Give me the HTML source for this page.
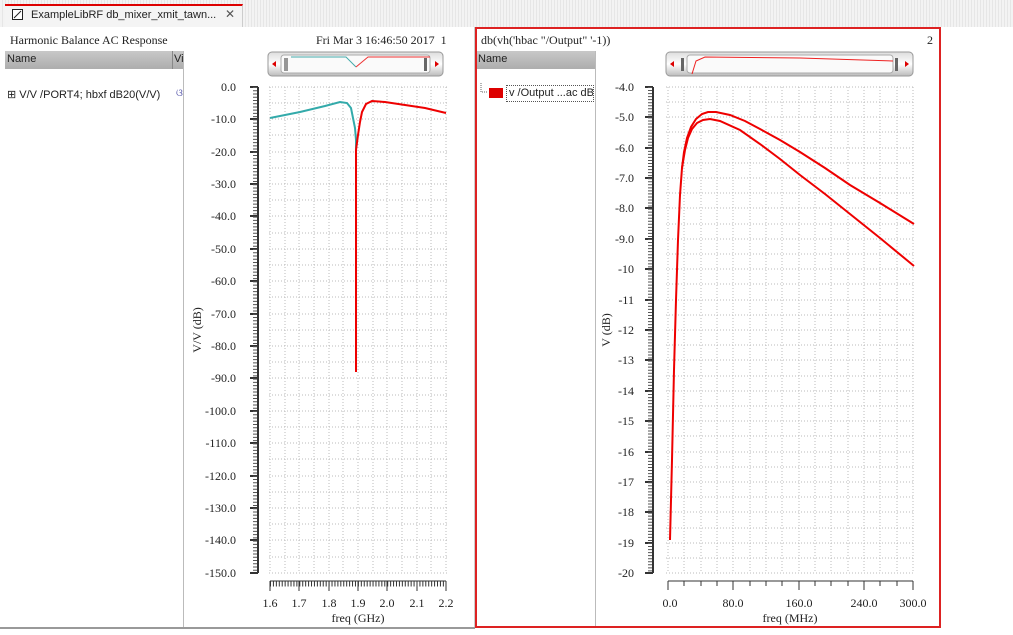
<!DOCTYPE html>
<html><head><meta charset="utf-8"><style>
*{margin:0;padding:0;box-sizing:border-box}
body{width:1013px;height:635px;background:#fff;position:relative;overflow:hidden;font-family:"Liberation Sans",sans-serif}
.a{position:absolute}
.serif{font-family:"Liberation Serif",serif}
</style></head><body>
<div class="a" style="left:0;top:0;width:1013px;height:27px;background:repeating-linear-gradient(90deg,#f3f3f3 0 2px,#e6e6e6 2px 3px)"></div>
<div class="a" style="left:5px;top:4px;width:238px;height:23px;background:#f4f4f4;border-top:2px solid #d00;border-right:1px solid #ccc"></div>
<div class="a" style="left:12px;top:9px;width:11px;height:11px;border:1px solid #222;background:#fff"></div>
<svg class="a" style="left:12px;top:9px" width="11" height="11"><path d="M2 9 L9 2" stroke="#222"/></svg>
<div class="a" style="left:31px;top:9px;font-size:11px;color:#222">ExampleLibRF db_mixer_xmit_tawn...</div>
<div class="a" style="left:225px;top:7px;font-size:12px;color:#555">✕</div>

<div class="a" style="left:0;top:27px;width:475px;height:601px;background:#fff;border-right:1px solid #ccc"></div>
<div class="a serif" style="left:10px;top:33px;font-size:12px;color:#222">Harmonic Balance AC Response</div>
<div class="a serif" style="left:316px;top:33px;font-size:12px;color:#222">Fri Mar 3 16:46:50 2017 &nbsp;1</div>
<div class="a" style="left:5px;top:51px;width:179px;height:18px;background:linear-gradient(#c8c8c8,#adadad)"></div>
<div class="a" style="left:172px;top:51px;width:1px;height:18px;background:#888"></div>
<div class="a" style="left:7px;top:53px;font-size:11px;color:#222">Name</div>
<div class="a" style="left:174px;top:53px;font-size:11px;color:#222;width:10px;overflow:hidden">Vi</div>
<div class="a" style="left:183px;top:51px;width:1px;height:577px;background:#bbb"></div>
<div class="a" style="left:7px;top:88px;font-size:11px;color:#222">⊞ V/V /PORT4; hbxf dB20(V/V)</div>
<div class="a" style="left:176px;top:88px;font-size:10px;color:#55a">ଓ</div>
<div class="a" style="left:0;top:627px;width:475px;height:2px;background:#999"></div>

<div class="a" style="left:475px;top:27px;width:466px;height:601px;border:2px solid #d22"></div>
<div class="a serif" style="left:481px;top:33px;font-size:12px;color:#222">db(vh('hbac "/Output" '-1))</div>
<div class="a serif" style="left:927px;top:33px;font-size:12px;color:#222">2</div>
<div class="a" style="left:477px;top:51px;width:118px;height:18px;background:linear-gradient(#c8c8c8,#adadad)"></div>
<div class="a" style="left:478px;top:53px;font-size:11px;color:#222">Name</div>
<div class="a" style="left:595px;top:51px;width:1px;height:575px;background:#bbb"></div>
<svg class="a" style="left:480px;top:83px" width="12" height="12"><path d="M1 0V9H8" stroke="#666" stroke-dasharray="1 1" fill="none"/></svg>
<div class="a" style="left:489px;top:88px;width:14px;height:10px;background:#d00"></div>
<div class="a" style="left:506px;top:85px;width:88px;height:17px;border:1px dotted #555;font-size:11px;color:#222;padding:1px 2px;white-space:nowrap;overflow:hidden">v /Output ...ac dB</div>

<svg class="a" style="left:0;top:0" width="1013" height="635" font-family="Liberation Serif,serif" font-size="12" fill="#222">
<defs>
<linearGradient id="sb" x1="0" y1="0" x2="0" y2="1"><stop offset="0" stop-color="#ddd"/><stop offset=".5" stop-color="#fff"/><stop offset="1" stop-color="#bbb"/></linearGradient>
</defs>
<rect x="268" y="52" width="175" height="24" rx="4" fill="url(#sb)" stroke="#999"/>
<rect x="281" y="55" width="149" height="18" rx="3" fill="#fafafa" stroke="#aaa"/>
<path d="M272 64l4-3v6z M439 64l-4-3v6z" fill="#d00"/>
<path d="M285 58v13M287 58v13" stroke="#333"/>
<rect x="424" y="58" width="3" height="13" fill="#666"/>
<path d="M291 57H346L356 67" stroke="#4aa" fill="none"/>
<path d="M356 67L368 57H430" stroke="#e33" fill="none"/>
<rect x="666" y="52" width="247" height="24" rx="4" fill="url(#sb)" stroke="#999"/>
<rect x="687" y="55" width="206" height="18" rx="3" fill="#fafafa" stroke="#aaa"/>
<path d="M670 64l4-3v6z M909 64l-4-3v6z" fill="#d00"/>
<rect x="681" y="58" width="3" height="13" fill="#666"/>
<rect x="895" y="58" width="3" height="13" fill="#666"/>
<path d="M692 74L696 61L705 57L800 58L893 61" stroke="#e22" fill="none"/>

<g stroke="#bbb" stroke-dasharray="1 2">
<path d="M269 87H447M269 103H447M269 119H447M269 135H447M269 152H447M269 168H447M269 184H447M269 200H447M269 216H447M269 233H447M269 249H447M269 265H447M269 281H447M269 297H447M269 314H447M269 330H447M269 346H447M269 362H447M269 378H447M269 395H447M269 411H447M269 427H447M269 443H447M269 459H447M269 476H447M269 492H447M269 508H447M269 524H447M269 540H447M269 557H447M269 573H447"/>
<path d="M270 87V573M285 87V573M299 87V573M314 87V573M329 87V573M343 87V573M358 87V573M373 87V573M387 87V573M402 87V573M417 87V573M431 87V573M446 87V573"/>
</g>
<path d="M258 87V573" stroke="#333" stroke-width="2"/>
<path d="M250 87H258M250 119H258M250 152H258M250 184H258M250 216H258M250 249H258M250 281H258M250 314H258M250 346H258M250 378H258M250 411H258M250 443H258M250 476H258M250 508H258M250 540H258M250 573H258" stroke="#333" stroke-width="2"/>
<path d="M255 87V573" stroke="#555" stroke-width="4" stroke-dasharray="1 2.24"/>
<path d="M270 581H446" stroke="#333"/>
<path d="M270 581V591M299 581V591M329 581V591M358 581V591M387 581V591M417 581V591M446 581V591" stroke="#333"/>
<path d="M270 584H446" stroke="#333" stroke-width="5" stroke-dasharray="1 1.93"/>
<g text-anchor="end">
<text x="236" y="91">0.0</text><text x="236" y="123">-10.0</text><text x="236" y="156">-20.0</text><text x="236" y="188">-30.0</text><text x="236" y="220">-40.0</text><text x="236" y="253">-50.0</text><text x="236" y="285">-60.0</text><text x="236" y="318">-70.0</text><text x="236" y="350">-80.0</text><text x="236" y="382">-90.0</text><text x="236" y="415">-100.0</text><text x="236" y="447">-110.0</text><text x="236" y="480">-120.0</text><text x="236" y="512">-130.0</text><text x="236" y="544">-140.0</text><text x="236" y="577">-150.0</text>
</g>
<g text-anchor="middle">
<text x="270" y="607">1.6</text><text x="299" y="607">1.7</text><text x="329" y="607">1.8</text><text x="358" y="607">1.9</text><text x="387" y="607">2.0</text><text x="417" y="607">2.1</text><text x="446" y="607">2.2</text>
<text x="358" y="622">freq (GHz)</text>
</g>
<text transform="translate(201 330) rotate(-90)" text-anchor="middle">V/V (dB)</text>
<path d="M270 118L300 112L325 106L340 102L347 103L351 108L353 118L355 128L356 140L356 372" stroke="#3aa" stroke-width="2" fill="none"/>
<path d="M356 372V150L358 135L360 122L362 112L366 104L372 101L385 102L405 105L425 108L446 113" stroke="#e00" stroke-width="2" fill="none"/>

<g stroke="#bbb" stroke-dasharray="1 2">
<path d="M666 87H915M666 102H915M666 117H915M666 132H915M666 148H915M666 163H915M666 178H915M666 193H915M666 208H915M666 224H915M666 239H915M666 254H915M666 269H915M666 284H915M666 300H915M666 315H915M666 330H915M666 345H915M666 360H915M666 376H915M666 391H915M666 406H915M666 421H915M666 436H915M666 452H915M666 467H915M666 482H915M666 497H915M666 512H915M666 528H915M666 543H915M666 558H915M666 573H915"/>
<path d="M668 87V573M684 87V573M701 87V573M717 87V573M733 87V573M750 87V573M766 87V573M782 87V573M799 87V573M815 87V573M831 87V573M848 87V573M864 87V573M880 87V573M897 87V573M913 87V573"/>
</g>
<path d="M653 87V573" stroke="#333" stroke-width="2"/>
<path d="M645 87H653M645 117H653M645 148H653M645 178H653M645 208H653M645 239H653M645 269H653M645 300H653M645 330H653M645 360H653M645 391H653M645 421H653M645 452H653M645 482H653M645 512H653M645 543H653M645 573H653" stroke="#333" stroke-width="2"/>
<path d="M650 87V573" stroke="#555" stroke-width="4" stroke-dasharray="1 2.04"/>
<path d="M668 581H913" stroke="#333"/>
<path d="M668 581V590M684 581V586M701 581V586M717 581V586M733 581V590M750 581V586M766 581V586M782 581V586M799 581V590M815 581V586M831 581V586M848 581V586M864 581V590M880 581V586M897 581V586M913 581V590" stroke="#333"/>
<g text-anchor="end">
<text x="634" y="91">-4.0</text><text x="634" y="121">-5.0</text><text x="634" y="152">-6.0</text><text x="634" y="182">-7.0</text><text x="634" y="212">-8.0</text><text x="634" y="243">-9.0</text><text x="634" y="273">-10</text><text x="634" y="304">-11</text><text x="634" y="334">-12</text><text x="634" y="364">-13</text><text x="634" y="395">-14</text><text x="634" y="425">-15</text><text x="634" y="456">-16</text><text x="634" y="486">-17</text><text x="634" y="516">-18</text><text x="634" y="547">-19</text><text x="634" y="577">-20</text>
</g>
<g text-anchor="middle">
<text x="670" y="607">0.0</text><text x="733" y="607">80.0</text><text x="799" y="607">160.0</text><text x="864" y="607">240.0</text><text x="913" y="607">300.0</text>
<text x="790" y="622">freq (MHz)</text>
</g>
<text transform="translate(610 330) rotate(-90)" text-anchor="middle">V (dB)</text>
<path d="M670 540L672 460L674 370L676 300L678 240L680 195L682 168L684 152L687 138L691 127L696 119L702 114L708 112L716 112L730 115L745 121L760 129L780 140L800 152L825 168L850 185L880 203L914 224" stroke="#e00" stroke-width="2" fill="none"/>
<path d="M682 168L685 150L688 138L692 129L697 123L703 120L710 119L720 121L740 130L760 144L780 159L800 175L825 194L850 214L880 238L914 266" stroke="#e00" stroke-width="2" fill="none"/>
</svg>
</body></html>
